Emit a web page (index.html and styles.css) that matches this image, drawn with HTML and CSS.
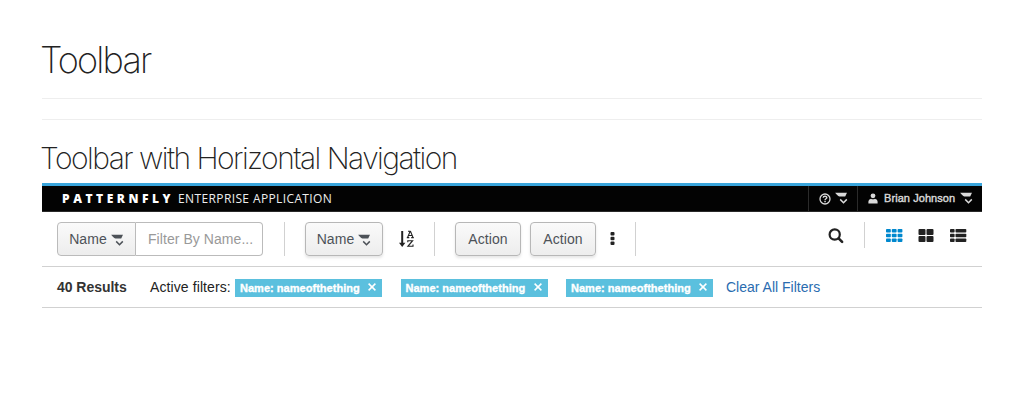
FILE: index.html
```html
<!DOCTYPE html>
<html lang="en">
<head>
<meta charset="utf-8">
<title>Toolbar</title>
<link rel="stylesheet" href="styles.css">
</head>
<body>
<svg class="defs" width="0" height="0">
  <symbol id="caret" viewBox="0 0 13 13"><path d="M.2.7h11.8L10.2 4.4H4.4C2.8 4 1.5 2.4.2.7z" fill="currentColor"/><path d="M5.2 7.4l3.3 3.3 3.3-3.3" fill="none" stroke="currentColor" stroke-width="1.5"/></symbol>
  <symbol id="close" viewBox="0 0 8 8"><path d="M.6.6l6.8 6.8M7.4.6L.6 7.4" stroke="currentColor" stroke-width="1.5"/></symbol>
</svg>
<main class="page">
  <h1 class="title">Toolbar</h1>
  <div class="rule"></div>
  <div class="rule rule-second"></div>
  <h2 class="subtitle">Toolbar with Horizontal Navigation</h2>
  <nav class="navbar">
    <div class="brand"><b class="brand-name">PATTERNFLY</b><span class="brand-app">ENTERPRISE APPLICATION</span></div>
    <div class="nav-item nav-help">
      <svg width="12" height="12" viewBox="0 0 12 12"><circle cx="6" cy="6" r="5" fill="none" stroke="currentColor" stroke-width="1.3"/><path d="M4.2 4.8C4.2 2.7 7.8 2.8 7.8 4.7 7.8 5.8 6.1 5.7 6.1 7" fill="none" stroke="currentColor" stroke-width="1.4"/><path d="M5.3 7.8h1.5v1.4H5.3z" fill="currentColor"/></svg>
      <svg class="caret-help" width="13" height="13"><use href="#caret"/></svg>
    </div>
    <div class="nav-item nav-user">
      <svg width="10" height="11" viewBox="0 0 10 11"><circle cx="5" cy="2.8" r="2.4" fill="currentColor"/><path d="M.4 10.5V8.4Q.4 6.3 3 5.7q2 1.2 4 0 2.6.6 2.6 2.7v2.1z" fill="currentColor"/></svg>
      <span class="user-name">Brian Johnson</span>
      <svg class="caret-user" width="13" height="13"><use href="#caret"/></svg>
    </div>
  </nav>
  <section class="toolbar">
    <div class="filter">
      <button class="btn btn-joined"><span>Name</span><svg class="caret" width="13" height="13"><use href="#caret"/></svg></button>
      <input class="filter-input" placeholder="Filter By Name...">
    </div>
    <i class="divider divider-filter"></i>
    <button class="btn btn-sort"><span>Name</span><svg class="caret" width="13" height="13"><use href="#caret"/></svg></button>
    <svg class="sort-icon" width="16" height="18" viewBox="0 0 16 18" fill="none" stroke="#222"><path d="M3.2 1v13" stroke-width="2"/><path d="M0 12.8h6.4L3.2 17z" fill="#222" stroke="none"/><path d="M8.6 7.5L11 1.6h.6L14 7.5M9.6 5.5H13M7.8 7.6h2.5M12.2 7.6h2.6M9 1.3h2.6M8.8 12.2v-1.5h4.8l-4.7 5.6H14v-1.7" stroke-width="1.1"/></svg>
    <i class="divider divider-sort"></i>
    <button class="btn btn-action">Action</button>
    <button class="btn btn-action btn-next">Action</button>
    <svg class="kebab" width="5" height="13" viewBox="0 0 5 13" fill="#222"><rect x=".5" width="4" height="3.6" rx="1"/><rect x=".5" y="4.7" width="4" height="3.6" rx="1"/><rect x=".5" y="9.4" width="4" height="3.6" rx="1"/></svg>
    <i class="divider divider-actions"></i>
    <div class="views">
      <svg class="search" width="16" height="16" viewBox="0 0 16 16" fill="none" stroke="#222"><circle cx="6.7" cy="6.5" r="5.1" stroke-width="2.2"/><path d="M10.6 10.4l3.5 3.5" stroke-width="2.6" stroke-linecap="round"/></svg>
      <i class="divider divider-views"></i>
      <svg width="17" height="13" viewBox="0 0 17 13" fill="#0088ce"><rect width="4.8" height="3.6" rx=".8"/><rect x="5.8" width="4.8" height="3.6" rx=".8"/><rect x="11.6" width="4.8" height="3.6" rx=".8"/><rect y="4.7" width="4.8" height="3.6" rx=".8"/><rect x="5.8" y="4.7" width="4.8" height="3.6" rx=".8"/><rect x="11.6" y="4.7" width="4.8" height="3.6" rx=".8"/><rect y="9.4" width="4.8" height="3.6" rx=".8"/><rect x="5.8" y="9.4" width="4.8" height="3.6" rx=".8"/><rect x="11.6" y="9.4" width="4.8" height="3.6" rx=".8"/></svg>
      <svg class="view-card" width="16" height="13" viewBox="0 0 16 13" fill="#222"><rect x=".5" width="7" height="6" rx="1"/><rect x="8.5" width="7" height="6" rx="1"/><rect x=".5" y="7" width="7" height="6" rx="1"/><rect x="8.5" y="7" width="7" height="6" rx="1"/></svg>
      <svg class="view-list" width="17" height="13" viewBox="0 0 17 13" fill="#222"><rect width="4.6" height="3.6" rx=".8"/><rect x="5.5" width="10.8" height="3.6" rx=".8"/><rect y="4.7" width="4.6" height="3.6" rx=".8"/><rect x="5.5" y="4.7" width="10.8" height="3.6" rx=".8"/><rect y="9.4" width="4.6" height="3.6" rx=".8"/><rect x="5.5" y="9.4" width="10.8" height="3.6" rx=".8"/></svg>
    </div>
  </section>
  <section class="results">
    <b class="count">40 Results</b>
    <span class="active">Active filters:</span>
    <div class="tags">
      <span class="tag"><span class="tag-text">Name: nameofthething</span><svg width="8" height="8"><use href="#close"/></svg></span>
      <span class="tag"><span class="tag-text">Name: nameofthething</span><svg width="8" height="8"><use href="#close"/></svg></span>
      <span class="tag"><span class="tag-text">Name: nameofthething</span><svg width="8" height="8"><use href="#close"/></svg></span>
    </div>
    <a class="clear">Clear All Filters</a>
  </section>
</main>
</body>
</html>
```
FILE: styles.css
```css
* { box-sizing: border-box; }
body { margin: 0; background: #fff; color: #333; font: 14px/20px "Liberation Sans", Arial, sans-serif; }
svg { display: block; flex: none; }
.defs { position: absolute; }
.page { width: 940px; margin-left: 42px; padding-top: 40px; }
.title, .subtitle { margin: 0 0 0 -2px; font-family: Inter, "Liberation Sans", sans-serif; font-weight: 200; color: #222; white-space: nowrap; }
.title { height: 58px; font-size: 36px; line-height: 41px; letter-spacing: -1.85px; }
.rule { height: 1px; background: #eee; }
.rule-second { margin-top: 20px; }
.subtitle { height: 63px; padding-top: 20px; font-size: 30px; line-height: 36px; letter-spacing: -1.54px; }
.navbar { display: flex; height: 29px; border-top: 3px solid #39a5dc; border-bottom: 1px solid #292929; background: #030303; color: #d9d9d9; }
.brand { display: flex; align-items: center; padding: 1px 0 0 20px; font: 12px/24px "Open Sans", sans-serif; color: #fff; white-space: nowrap; }
.brand-name { width: 116px; font-weight: 800; letter-spacing: 3.55px; }
.brand-app { color: #eee; letter-spacing: .38px; }
.nav-item { display: flex; align-items: center; border-left: 1px solid #2b2b2b; }
.nav-help { width: 49px; margin-left: auto; padding-left: 10px; }
.caret-help { margin-left: 4px; }
.nav-user { width: 125px; padding-left: 10px; }
.user-name { width: 76px; margin: -1px 0 0 6px; font-size: 11px; white-space: nowrap; -webkit-text-stroke: .4px; letter-spacing: .07px; }
.toolbar { display: flex; align-items: flex-start; height: 55px; padding: 10px 15px 0; border-bottom: 1px solid #d1d1d1; }
.filter { display: flex; }
.btn { display: flex; align-items: center; justify-content: center; height: 34px; padding: 0; border: 1px solid #b7b7b7; border-radius: 4px; background: linear-gradient(#fafafa, #ededed); box-shadow: 0 2px 3px rgba(3,3,3,.1); color: #4d5258; font: 14px/20px "Liberation Sans", Arial, sans-serif; letter-spacing: .1px; }
.caret { margin: 3px 0 0 4px; }
.btn-joined { width: 79px; border-color: #bbb; border-radius: 4px 0 0 4px; box-shadow: none; }
.filter-input { width: 127px; height: 34px; padding: 0 8px 0 12px; border: 1px solid #bbb; border-left: 0; border-radius: 0 4px 4px 0; font: 14px/20px "Liberation Sans", Arial, sans-serif; letter-spacing: .06px; }
.filter-input::placeholder { color: #999; opacity: 1; }
.divider { width: 1px; height: 34px; background: #d1d1d1; }
.divider-filter { margin: 0 20px 0 21px; }
.btn-sort { width: 78px; }
.sort-icon { margin: 8px 0 0 16px; }
.divider-sort { margin: 0 20px 0 19px; }
.btn-action { width: 66px; }
.btn-next { margin-left: 9px; }
.kebab { margin: 10px 0 0 14px; }
.divider-actions { margin-left: 20px; }
.views { display: flex; align-items: center; height: 26px; margin-left: auto; }
.search { margin-top: 2px; }
.divider-views { height: 26px; margin: 0 21px 0 20px; }
.view-card { margin-left: 15px; }
.view-list { margin-left: 16px; }
.results { display: flex; align-items: center; height: 41px; padding-left: 15px; border-bottom: 1px solid #d1d1d1; box-shadow: 0 1px 0 #f5f5f5; white-space: nowrap; }
.count { width: 93px; letter-spacing: -.03px; }
.active { width: 85px; color: #222; letter-spacing: .1px; }
.tags { display: flex; gap: 18.5px; padding-top: 1px; }
.tag { display: flex; align-items: center; width: 147px; height: 18px; padding: 0 5px; background: #5bc0de; color: #fff; font-size: 11px; font-weight: 700; }
.tag svg { margin-top: -2px; }
.tag-text { width: 128px; -webkit-text-stroke: .35px; letter-spacing: .03px; }
.clear { margin-left: 13px; color: #2a6cb0; }
```
